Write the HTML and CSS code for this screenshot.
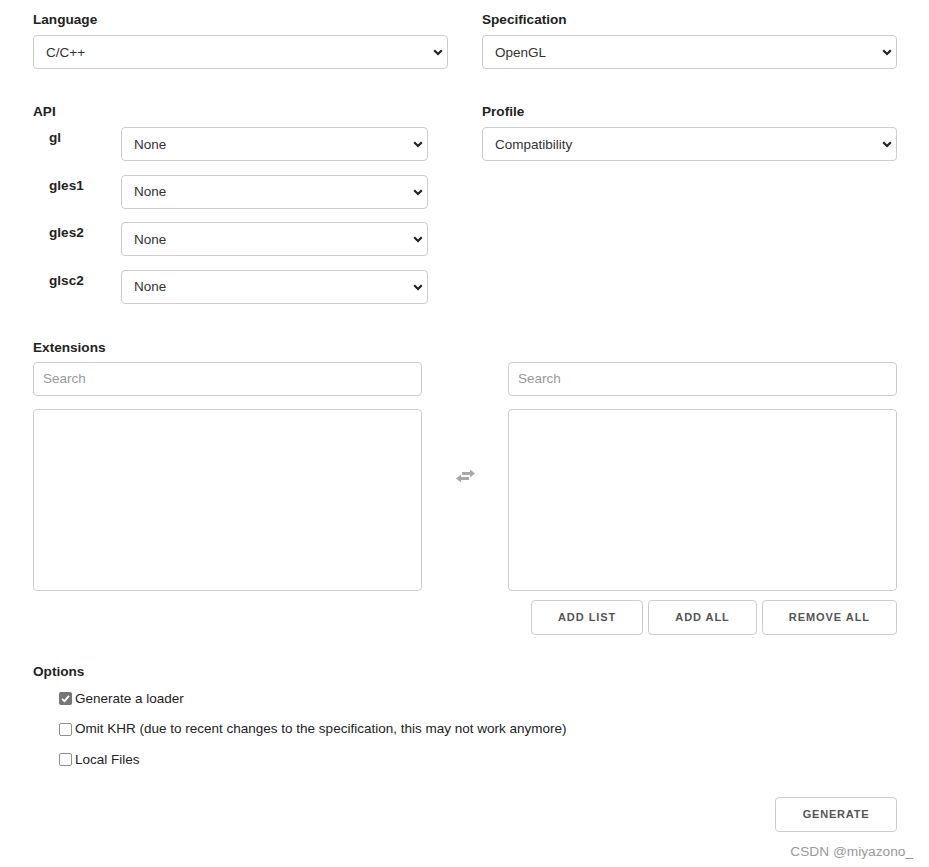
FILE: index.html
```html
<!DOCTYPE html>
<html lang="en">
<head>
<meta charset="utf-8">
<title>glad generator</title>
<link rel="stylesheet" href="styles.css">
</head>
<body>
<div class="page">
  <div class="two top">
    <div class="field">
      <label class="lbl">Language</label>
      <div class="sel">
        <select><option>C/C++</option></select>
        <svg class="chev" viewBox="0 0 10 7" width="10" height="7"><polyline points="1.2,1.2 5,5 8.8,1.2" fill="none" stroke="#222" stroke-width="2.2"/></svg>
      </div>
    </div>
    <div class="field">
      <label class="lbl">Specification</label>
      <div class="sel">
        <select><option>OpenGL</option></select>
        <svg class="chev" viewBox="0 0 10 7" width="10" height="7"><polyline points="1.2,1.2 5,5 8.8,1.2" fill="none" stroke="#222" stroke-width="2.2"/></svg>
      </div>
    </div>
  </div>

  <div class="two">
    <div class="field">
      <div class="lbl">API</div>
      <div class="api-list">
        <div class="api-item">
          <span class="api-name">gl</span>
          <div class="sel api-sel">
            <select><option>None</option></select>
            <svg class="chev" viewBox="0 0 10 7" width="10" height="7"><polyline points="1.2,1.2 5,5 8.8,1.2" fill="none" stroke="#222" stroke-width="2.2"/></svg>
          </div>
        </div>
        <div class="api-item">
          <span class="api-name">gles1</span>
          <div class="sel api-sel">
            <select><option>None</option></select>
            <svg class="chev" viewBox="0 0 10 7" width="10" height="7"><polyline points="1.2,1.2 5,5 8.8,1.2" fill="none" stroke="#222" stroke-width="2.2"/></svg>
          </div>
        </div>
        <div class="api-item">
          <span class="api-name">gles2</span>
          <div class="sel api-sel">
            <select><option>None</option></select>
            <svg class="chev" viewBox="0 0 10 7" width="10" height="7"><polyline points="1.2,1.2 5,5 8.8,1.2" fill="none" stroke="#222" stroke-width="2.2"/></svg>
          </div>
        </div>
        <div class="api-item">
          <span class="api-name">glsc2</span>
          <div class="sel api-sel">
            <select><option>None</option></select>
            <svg class="chev" viewBox="0 0 10 7" width="10" height="7"><polyline points="1.2,1.2 5,5 8.8,1.2" fill="none" stroke="#222" stroke-width="2.2"/></svg>
          </div>
        </div>
      </div>
    </div>
    <div class="field">
      <label class="lbl">Profile</label>
      <div class="sel">
        <select><option>Compatibility</option></select>
        <svg class="chev" viewBox="0 0 10 7" width="10" height="7"><polyline points="1.2,1.2 5,5 8.8,1.2" fill="none" stroke="#222" stroke-width="2.2"/></svg>
      </div>
    </div>
  </div>

  <section class="ext">
    <div class="lbl ext-lbl">Extensions</div>
    <div class="ext-grid">
      <div class="col">
        <input class="search" type="text" placeholder="Search">
        <textarea class="list"></textarea>
      </div>
      <div class="swap">
        <svg viewBox="0 0 19 14" width="19" height="14">
          <path d="M6 3h8V0.5L19 4.5L14 8.5V6H6z" fill="#a8a8a8"/>
          <path d="M13 8H5V5.5L0 9.5L5 13.5V11H13z" fill="#a8a8a8"/>
        </svg>
      </div>
      <div class="col">
        <input class="search" type="text" placeholder="Search">
        <textarea class="list"></textarea>
      </div>
    </div>
    <div class="btn-row">
      <button class="btn">ADD LIST</button>
      <button class="btn">ADD ALL</button>
      <button class="btn">REMOVE ALL</button>
    </div>
  </section>

  <section class="options">
    <div class="lbl">Options</div>
    <div class="opt-list">
      <label class="opt">
        <span class="box checked"><svg viewBox="0 0 13 13" width="13" height="13"><polyline points="3,6.8 5.4,9.2 10,3.8" fill="none" stroke="#fff" stroke-width="1.8"/></svg></span>
        Generate a loader
      </label>
      <label class="opt">
        <span class="box"></span>
        Omit KHR (due to recent changes to the specification, this may not work anymore)
      </label>
      <label class="opt">
        <span class="box"></span>
        Local Files
      </label>
    </div>
  </section>

  <div class="gen-row">
    <button class="btn gen">GENERATE</button>
  </div>
  <div class="wm">CSDN @miyazono_</div>
</div>
</body>
</html>
```

FILE: styles.css
```css
* { box-sizing: border-box; }

body {
  margin: 0;
  background: #fff;
  color: #333;
  font-family: "Liberation Sans", Arial, sans-serif;
  font-size: 13.5px;
}

.page {
  width: 929px;
  padding: 9px 32px 0 33px;
}

.lbl {
  display: block;
  font-weight: bold;
  font-size: 13.6px;
  line-height: 21px;
  color: #222;
  margin-bottom: 5px;
}

.two {
  display: grid;
  grid-template-columns: 415px 415px;
  column-gap: 34px;
}

.top { margin-bottom: 32px; }

.sel { position: relative; }

.sel select {
  -webkit-appearance: none;
  appearance: none;
  display: block;
  width: 100%;
  height: 34px;
  border: 1px solid #ccc;
  border-radius: 4px;
  padding: 0 30px 0 12px;
  font: inherit;
  color: #333;
  background: #fff;
}

.chev {
  position: absolute;
  right: 5px;
  top: 50%;
  margin-top: -3px;
  pointer-events: none;
}

.api-list {
  display: flex;
  flex-direction: column;
  gap: 13.67px;
}

.api-item {
  display: flex;
  align-items: flex-start;
}

.api-name {
  width: 88px;
  padding-left: 16px;
  font-weight: bold;
  font-size: 13.6px;
  line-height: 21px;
  color: #222;
}

.api-sel { width: 307px; }

.ext { margin-top: 33px; }
.ext-lbl { margin-bottom: 4px; }

.ext-grid {
  display: grid;
  grid-template-columns: 389px 86px 389px;
}

.col {
  display: flex;
  flex-direction: column;
  gap: 13px;
}

.search {
  display: block;
  height: 34px;
  border: 1px solid #ccc;
  border-radius: 4px;
  padding: 0 9px;
  font: inherit;
  color: #333;
}

.search::placeholder { color: #999; }

.list {
  display: block;
  height: 182px;
  border: 1px solid #ccc;
  border-radius: 4px;
  resize: none;
  font: inherit;
}

.swap {
  display: flex;
  align-items: center;
  justify-content: center;
}

.btn-row {
  display: flex;
  justify-content: flex-end;
  gap: 5px;
  margin-top: 9px;
}

.btn {
  height: 35px;
  padding: 0 26px;
  border: 1px solid #ccc;
  border-radius: 4px;
  background: #fff;
  color: #555;
  font-family: "Liberation Sans", Arial, sans-serif;
  font-weight: bold;
  font-size: 11px;
  letter-spacing: 0.95px;
}

.options { margin-top: 26px; }

.opt-list {
  margin-top: 7px;
  padding-left: 26px;
  display: flex;
  flex-direction: column;
  gap: 10.5px;
}

.opt {
  display: flex;
  align-items: center;
  gap: 3px;
  line-height: 20px;
  color: #222;
}

.box {
  display: block;
  width: 13px;
  height: 13px;
  border: 1px solid #8f8f8f;
  border-radius: 2px;
  background: #fff;
}

.box.checked {
  border: none;
  background: #767676;
}

.box svg { display: block; }

.gen-row {
  display: flex;
  justify-content: flex-end;
  margin-top: 27px;
}

.gen { width: 122px; padding: 0; letter-spacing: 0.8px; }

.wm {
  margin-top: 10px;
  margin-right: -16px;
  text-align: right;
  color: #999;
  font-size: 13.7px;
  line-height: 20px;
}
```
